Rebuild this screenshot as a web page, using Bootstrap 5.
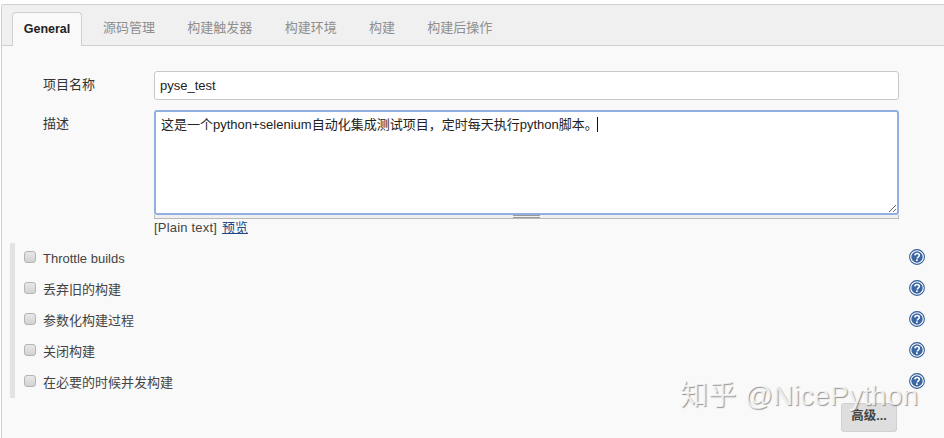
<!DOCTYPE html>
<html lang="zh"><head><meta charset="utf-8">
<link href="https://cdn.jsdelivr.net/npm/bootstrap@5.3.0/dist/css/bootstrap.min.css" rel="stylesheet">
<style>
html,body{height:438px;overflow:hidden;background:#fff}
body{font-family:"Liberation Sans","Noto Sans CJK SC",sans-serif;font-size:13px;color:#333;padding-top:4px}
.shell{height:434px;margin-left:1px;border:1px solid #d0d0d0;border-right:0;border-bottom:0;border-radius:3px 0 0 0;background:#f9f9f9;position:relative;overflow:hidden}
.tabbar{height:41px;background:#f0f0f0;border-bottom:1px solid #cfcfcf;padding:7px 0 0 10px}
.tabbar .tabitem{height:33px;line-height:32px;padding:0 11.3px 0 21px;color:#8f8f8f;font-size:13px;text-decoration:none}
.tabbar .tabitem.first{width:70px;padding:0;text-align:center;background:#f9f9f9;border:1px solid #cfcfcf;border-bottom:0;border-radius:4px 4px 0 0;color:#222;font-weight:700;height:34px;font-size:12.5px;line-height:32px}
.formrow{padding-left:41px;height:29px;margin-top:25px}
.lbl{width:111px;flex:none;color:#333;line-height:28px}
.nameinput{width:745px;height:29px;border:1px solid #c8c8c8;border-radius:3px;padding:0 5px;font-size:13px;color:#222;font-family:inherit;background:#fff;line-height:27px}
.descrow{padding-left:41px;margin-top:10px}
.desc-lbl{line-height:28px}
.descbox{width:745px;height:105px;border:2px solid #8fb0e0;border-radius:3px;background:#fff;padding:4px 5px;color:#222;font-size:13px;line-height:18px;resize:both;overflow:auto}
.caretmark{display:inline-block;width:1px;height:15px;background:#111;margin-left:-1px;vertical-align:-3px}
.grip{width:745px;height:4px;background:#f0f0f0;border:1px solid #b9b9b9;border-top:0;display:flex;justify-content:center}
.grip i{display:block;width:27px;height:3px;border-top:1px solid #999;border-bottom:1px solid #999}
.plain{line-height:16px;height:16px;margin-top:1px;color:#444;font-size:13px;letter-spacing:.2px}
.plain a{color:#204a87;margin-left:1px;letter-spacing:0}
.optblock{margin:7px 0 0 8px;border-left:5px solid #e3e3e3;height:155px;width:915px}
.optrow{height:31px;padding-left:9px}
.optrow .box{width:12px;height:12px;border:1px solid #b4b4b4;border-radius:3px;background:linear-gradient(#e8e8e8,#d2d2d2);flex:none;margin:-3px 7px 0 0}
.optrow .txt{color:#444;font-size:13px}
.optrow svg{margin-left:auto;flex:none;margin-top:-3px}
.advwrap{padding-right:47px;margin-top:5px}
.advbtn{width:56px;height:29px;background:#dedede;border:1px solid #d0d0d0;border-radius:3px;color:#444;font-weight:700;font-size:12.5px;padding:0 0 2px}
.wmark{position:absolute;left:678px;top:373px;font-size:28px;color:rgba(255,255,255,.82);text-shadow:1px 1px 1px rgba(70,70,70,.55);white-space:nowrap;line-height:36px;letter-spacing:.2px}
</style></head><body>
<div class="shell">
 <div class="tabbar d-flex align-items-start">
  <a class="tabitem first" href="#">General</a>
  <a class="tabitem" href="#">源码管理</a>
  <a class="tabitem" href="#">构建触发器</a>
  <a class="tabitem" href="#">构建环境</a>
  <a class="tabitem" href="#">构建</a>
  <a class="tabitem" href="#">构建后操作</a>
 </div>
 <div class="formrow d-flex"><div class="lbl">项目名称</div><input class="nameinput" value="pyse_test"></div>
 <div class="descrow d-flex">
  <div class="lbl desc-lbl">描述</div>
  <div>
   <div class="descbox">这是一个python+selenium自动化集成测试项目，定时每天执行python脚本。<span class="caretmark"></span></div>
   <div class="grip"><i></i></div>
   <div class="plain">[Plain text] <a href="#">预览</a></div>
  </div>
 </div>
 <div class="optblock">
  <div class="optrow d-flex align-items-center"><div class="box"></div><span class="txt">Throttle builds</span><svg width="16" height="16" viewBox="0 0 18 18"><use href="#q"/></svg></div>
  <div class="optrow d-flex align-items-center"><div class="box"></div><span class="txt">丢弃旧的构建</span><svg width="16" height="16" viewBox="0 0 18 18"><use href="#q"/></svg></div>
  <div class="optrow d-flex align-items-center"><div class="box"></div><span class="txt">参数化构建过程</span><svg width="16" height="16" viewBox="0 0 18 18"><use href="#q"/></svg></div>
  <div class="optrow d-flex align-items-center"><div class="box"></div><span class="txt">关闭构建</span><svg width="16" height="16" viewBox="0 0 18 18"><use href="#q"/></svg></div>
  <div class="optrow d-flex align-items-center"><div class="box"></div><span class="txt">在必要的时候并发构建</span><svg width="16" height="16" viewBox="0 0 18 18"><use href="#q"/></svg></div>
 </div>
 <div class="advwrap d-flex justify-content-end"><button class="advbtn">高级...</button></div>
 <div class="wmark">知乎 @NicePython</div>
</div>
<svg width="0" height="0" class="d-block position-absolute"><defs><g id="q">
 <circle cx="9" cy="9" r="8.3" fill="#fff" stroke="#2f5a96" stroke-width="1.2"/>
 <circle cx="9" cy="9" r="6.4" fill="#3a66a3"/>
 <path d="M6.6 7.2C6.7 5.8 7.7 5 9.1 5c1.5 0 2.5.9 2.5 2.1 0 1-.5 1.5-1.3 2-.7.5-1 .8-1 1.6" fill="none" stroke="#fff" stroke-width="1.8"/>
 <rect x="7.9" y="11.6" width="1.9" height="1.9" fill="#fff"/>
</g></defs></svg>
</body></html>
